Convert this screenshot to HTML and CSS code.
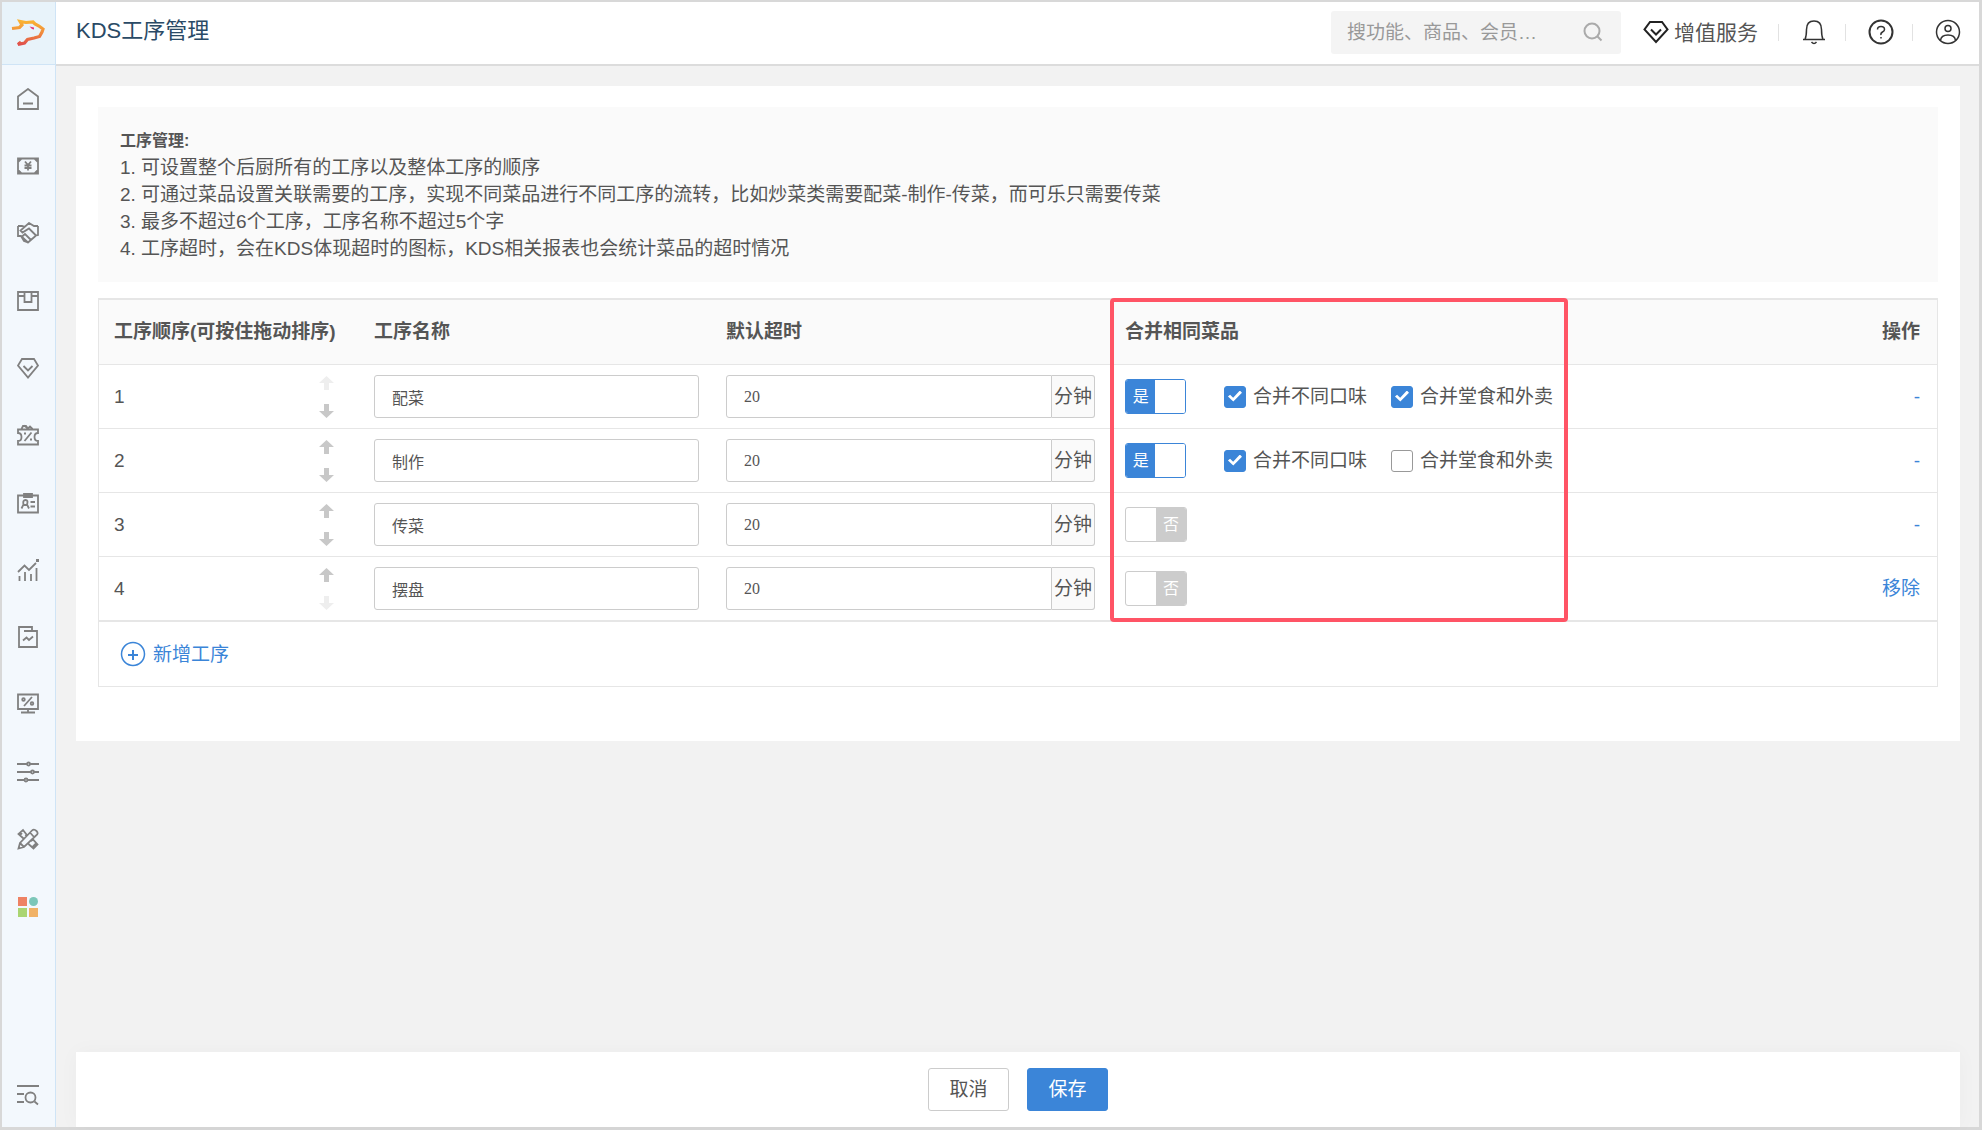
FILE: index.html
```html
<!DOCTYPE html>
<html lang="zh-CN">
<head>
<meta charset="utf-8">
<title>KDS工序管理</title>
<link rel="stylesheet" href="styles.css">
</head>
<body>
<div class="app">
  <aside class="sidebar">
    <a class="logo" href="#" aria-label="首页">
      <svg width="34" height="30" viewBox="0 0 34 30" fill="none" stroke-width="3.200">
        <defs><linearGradient id="brand" x1="0" y1="0" x2="0" y2="1"><stop offset="0" stop-color="#f9b233"/><stop offset=".5" stop-color="#f08a3c"/><stop offset="1" stop-color="#e0504c"/></linearGradient></defs>
        <path stroke="url(#brand)" d="M1 10.500L8.500 9.500L11 7L9 3.500L15 4.500L22 4L24 6L28 8L32 11L31 14L28.500 18.500L23 20L16.500 21.500L13.500 25L7 26.500L10 24"/>
        <path fill="#e5397c" d="M18.500 8.500L23 9.500L23 11.500L21 11Z"/>
      </svg>
    </a>
    <nav class="nav">
      <a href="#" aria-label="首页"><svg class="icon" viewBox="0 0 22 22"><path d="M1 8.500L11 1L21 8.500V21H1ZM6 15.500H16"/></svg></a>
      <a href="#" aria-label="收银"><svg class="icon" viewBox="0 0 22 22"><path d="M1 3.500H21V18.500H1ZM1 7L4.500 3.500M21 7L17.500 3.500M1 15L4.500 18.500M21 15L17.500 18.500M8 6.500L11 10L14 6.500M7.500 10.500H14.500M7.500 13H14.500M11 10V15.500"/></svg></a>
      <a href="#" aria-label="合作"><svg class="icon" viewBox="0 0 22 22"><path d="M1 4H5L8.500 5M21 4H17L12 1L3.500 8.500L5.500 10.500L12 6.500L19 13.500L21 13V4M1 4V14H4L11 20.500L18.500 14M5 14.500L8 12L14 18M4 14L7 19L11 20.500"/></svg></a>
      <a href="#" aria-label="商品"><svg class="icon" viewBox="0 0 22 22"><path d="M1 2H21V20H1ZM1 6H7.500M14.500 6H21M7.500 2V12H14.500V2"/></svg></a>
      <a href="#" aria-label="会员"><svg class="icon" viewBox="0 0 22 22"><path d="M5 2H17L21 8.500L11 20.500L1 8.500ZM6.500 9L11 13.500L15.500 9"/></svg></a>
      <a href="#" aria-label="营销"><svg class="icon" viewBox="0 0 22 22"><path d="M1 5.500H21V9Q17.500 9 17.500 13T21 17V20.500H1V17Q4.500 17 4.500 13T1 9ZM4.500 5L6 2H9L11 4.500L13 2.500L15.500 5M7 1.500L11 4.500M14.500 8.500L7.500 17"/><path d="M7 9.500H9M13 15.500H15" stroke-width="2"/></svg></a>
      <a href="#" aria-label="员工"><svg class="icon" viewBox="0 0 22 22"><path d="M1 3.500H21V20.500H1ZM7 2H15V5H7ZM13.500 10H18M13.500 14.500H18M4.500 16.500L6.500 12.500Q5.500 8 8.500 8T10 12.500L12 16.500M6.500 13H10"/></svg></a>
      <a href="#" aria-label="统计"><svg class="icon" viewBox="0 0 22 22"><path d="M1 13L7.500 6.500L12 11L19 4M2.500 17V22M8 13V22M14 15V22M19.500 9V22"/><path d="M19 1.500H22" stroke-width="3"/></svg></a>
      <a href="#" aria-label="报表"><svg class="icon" viewBox="0 0 22 22"><path d="M2 1H15V5H20V21H2ZM7 5H20M6 14.500L9.500 11.500L12 14L16 10.500"/></svg></a>
      <a href="#" aria-label="促销"><svg class="icon" viewBox="0 0 22 22"><path d="M1 1.500H21V16H1ZM4 19.500H18M11 16V19M15 4L7 13"/><circle cx="6.500" cy="6.500" r="1.300"/><circle cx="15" cy="10.500" r="1.300"/></svg></a>
      <a href="#" aria-label="设置"><svg class="icon" viewBox="0 0 22 22"><path d="M0 3H10M13 3H22M0 11H14M17 11H22M0 19H7.500M10.500 19H22"/><circle cx="11.500" cy="3" r="1.500"/><circle cx="15.500" cy="11" r="1.500"/><circle cx="9" cy="19" r="1.500"/></svg></a>
      <a href="#" aria-label="工具"><svg class="icon" viewBox="0 0 22 22"><path d="M1.500 20.500L3 15L15 2.500Q17 .5 19.500 3T19 7.500L7 19ZM3 15L7 19M13 4.500L17 9M8.500 8L9.500 6.500L6 2L1.500 6L6.500 10.500M14 13L16 11.500L20.500 16.500L16.500 20.500L11.500 16M2.500 7.500L5 5M15.500 19L19 15.500"/></svg></a>
      <a href="#" aria-label="应用"><svg class="icon" viewBox="0 0 22 22"><g stroke="none"><path fill="#ee8264" d="M1 2h9v9H1z"/><circle cx="16.500" cy="6.500" r="4.500" fill="#7cc7b9"/><path fill="#aad572" d="M1 13h9v9H1z"/><path fill="#f1b266" d="M12 13h9v9h-9z"/></g></svg></a>
    </nav>
    <a class="menu-search" href="#" aria-label="菜单搜索"><svg class="icon" viewBox="0 0 22 22"><path d="M0 2H22M0 10H7M0 18H7M17.500 17.500L21 20.500"/><circle cx="13.500" cy="13.500" r="5"/></svg></a>
  </aside>

  <div class="content">
    <header class="topbar">
      <h1>KDS工序管理</h1>
      <div class="search">
        <input type="search" aria-label="搜索" placeholder="搜功能、商品、会员…">
        <svg width="20" height="20" viewBox="0 0 20 20" fill="none" stroke="#aaa" stroke-width="2"><circle cx="9" cy="9" r="7.500"/><path d="M14.500 14.500L18.500 18.500"/></svg>
      </div>
      <a class="vip" href="#">
        <svg width="26" height="24" viewBox="0 0 26 24" fill="none" stroke="#222" stroke-width="2"><path d="M7 2H19L24.500 9.500L13 22L1.500 9.500ZM8 9.500L13 14.500L18 9.500"/></svg>
        增值服务
      </a>
      <button class="tool" aria-label="通知"><svg width="26" height="26" viewBox="0 0 26 26"><path d="M2 20.500H24M4 20.500Q5.500 17 5.500 10.500Q5.500 2 13 2T20.500 10.500Q20.500 17 22 20.500M10.500 23Q13 26 15.500 23"/></svg></button>
      <button class="tool" aria-label="帮助"><svg width="26" height="26" viewBox="0 0 26 26"><circle cx="13" cy="13" r="11.500" stroke-width="2"/><path d="M9.500 10.500Q9.500 7.500 13 7.500T16.500 10.500Q16.500 12 14.500 13T13 16M13 18V19.500"/></svg></button>
      <button class="tool" aria-label="账户"><svg width="26" height="26" viewBox="0 0 26 26"><circle cx="13" cy="13" r="11.500"/><circle cx="13" cy="9.500" r="3"/><path d="M5.500 21.500Q6 16 13 16T20.500 21.500"/></svg></button>
    </header>

    <main class="card">
      <section class="tips">
        <h2>工序管理:</h2>
        <p>1. 可设置整个后厨所有的工序以及整体工序的顺序</p>
        <p>2. 可通过菜品设置关联需要的工序，实现不同菜品进行不同工序的流转，比如炒菜类需要配菜-制作-传菜，而可乐只需要传菜</p>
        <p>3. 最多不超过6个工序，工序名称不超过5个字</p>
        <p>4. 工序超时，会在KDS体现超时的图标，KDS相关报表也会统计菜品的超时情况</p>
      </section>

      <table class="steps">
        <thead>
          <tr>
            <th class="col-order">工序顺序(可按住拖动排序)</th>
            <th class="col-name">工序名称</th>
            <th class="col-time">默认超时</th>
            <th class="col-merge">合并相同菜品<span class="marker"></span></th>
            <th class="col-action">操作</th>
          </tr>
        </thead>
        <tbody>
          <tr>
            <td><div class="order">1<span class="arrows"><button disabled aria-label="上移"><svg viewBox="0 0 15 14"><path d="M7.500 0L15 7H10V14H5V7H0Z"/></svg></button><button aria-label="下移"><svg viewBox="0 0 15 14"><path d="M7.500 14L15 7H10V0H5V7H0Z"/></svg></button></span></div></td>
            <td><input class="field" type="text" aria-label="工序名称" value="配菜"></td>
            <td><label class="timeout"><input class="field" type="text" aria-label="默认超时" value="20"><span>分钟</span></label></td>
            <td><div class="merge"><label class="switch"><input type="checkbox" aria-label="合并相同菜品" checked><span class="yes">是</span><span class="no">否</span></label><label class="check"><input type="checkbox" checked>合并不同口味</label><label class="check"><input type="checkbox" checked>合并堂食和外卖</label></div></td>
            <td class="action"><span class="none">-</span></td>
          </tr>
          <tr>
            <td><div class="order">2<span class="arrows"><button aria-label="上移"><svg viewBox="0 0 15 14"><path d="M7.500 0L15 7H10V14H5V7H0Z"/></svg></button><button aria-label="下移"><svg viewBox="0 0 15 14"><path d="M7.500 14L15 7H10V0H5V7H0Z"/></svg></button></span></div></td>
            <td><input class="field" type="text" aria-label="工序名称" value="制作"></td>
            <td><label class="timeout"><input class="field" type="text" aria-label="默认超时" value="20"><span>分钟</span></label></td>
            <td><div class="merge"><label class="switch"><input type="checkbox" aria-label="合并相同菜品" checked><span class="yes">是</span><span class="no">否</span></label><label class="check"><input type="checkbox" checked>合并不同口味</label><label class="check"><input type="checkbox">合并堂食和外卖</label></div></td>
            <td class="action"><span class="none">-</span></td>
          </tr>
          <tr>
            <td><div class="order">3<span class="arrows"><button aria-label="上移"><svg viewBox="0 0 15 14"><path d="M7.500 0L15 7H10V14H5V7H0Z"/></svg></button><button aria-label="下移"><svg viewBox="0 0 15 14"><path d="M7.500 14L15 7H10V0H5V7H0Z"/></svg></button></span></div></td>
            <td><input class="field" type="text" aria-label="工序名称" value="传菜"></td>
            <td><label class="timeout"><input class="field" type="text" aria-label="默认超时" value="20"><span>分钟</span></label></td>
            <td><div class="merge"><label class="switch"><input type="checkbox" aria-label="合并相同菜品"><span class="yes">是</span><span class="no">否</span></label></div></td>
            <td class="action"><span class="none">-</span></td>
          </tr>
          <tr>
            <td><div class="order">4<span class="arrows"><button aria-label="上移"><svg viewBox="0 0 15 14"><path d="M7.500 0L15 7H10V14H5V7H0Z"/></svg></button><button disabled aria-label="下移"><svg viewBox="0 0 15 14"><path d="M7.500 14L15 7H10V0H5V7H0Z"/></svg></button></span></div></td>
            <td><input class="field" type="text" aria-label="工序名称" value="摆盘"></td>
            <td><label class="timeout"><input class="field" type="text" aria-label="默认超时" value="20"><span>分钟</span></label></td>
            <td><div class="merge"><label class="switch"><input type="checkbox" aria-label="合并相同菜品"><span class="yes">是</span><span class="no">否</span></label></div></td>
            <td class="action"><a href="#">移除</a></td>
          </tr>
        </tbody>
        <tfoot>
          <tr>
            <td colspan="5">
              <button class="add"><svg width="26" height="26" viewBox="0 0 26 26" fill="none" stroke="currentColor"><circle cx="13" cy="13" r="11.500" stroke-width="1.500"/><path stroke-width="2" d="M8 14H18M13 9V19"/></svg>新增工序</button>
            </td>
          </tr>
        </tfoot>
      </table>
    </main>

    <footer class="actions">
      <button class="btn">取消</button>
      <button class="btn primary">保存</button>
    </footer>
  </div>
</div>
</body>
</html>
```

FILE: styles.css
```css
* {
  box-sizing: border-box;
}

body {
  margin: 0;
  font: 19px/27px "Liberation Sans", "Noto Sans CJK SC", sans-serif;
  color: #555;
}

button,
input {
  font: inherit;
  color: inherit;
}

button {
  padding: 0;
  border: 0;
  background: none;
}

a {
  color: #3b85d8;
  text-decoration: none;
}

svg {
  display: block;
}

.app {
  display: flex;
  min-height: 100vh;
  border: 2px solid #d8d8d8;
  border-width: 2px 3px 3px 2px;
  background: #f2f2f2;
}

/* Sidebar */

.sidebar {
  display: flex;
  flex-direction: column;
  flex: none;
  width: 54px;
  border-right: 1px solid #cfe4f6;
  background: #f3f8fd;
}

.logo {
  display: flex;
  align-items: center;
  justify-content: center;
  height: 63px;
  padding-right: 1px;
  border-bottom: 1px solid #cfe4f6;
  background: #e8f3fa;
}

.nav {
  display: flex;
  flex-direction: column;
  height: 875px;
}

.nav a {
  display: flex;
  flex: 1;
  align-items: center;
  justify-content: center;
  padding-right: 1px;
}

.icon {
  width: 22px;
  height: 22px;
  fill: none;
  stroke: #808080;
  stroke-width: 1.8;
}

.menu-search {
  margin: auto auto 21px;
  padding-right: 1px;
}

/* Top bar */

.content {
  display: flex;
  flex: 1;
  flex-direction: column;
  min-width: 0;
}

.topbar {
  display: flex;
  align-items: center;
  height: 64px;
  padding: 0 0 2px 20px;
  border-bottom: 2px solid #dcdcdc;
  background: #fff;
}

.topbar h1 {
  flex: 1;
  margin: 0 0 4px;
  font-size: 22px;
  font-weight: 400;
  color: #2a4a66;
}

.search {
  display: flex;
  align-items: center;
  width: 290px;
  height: 43px;
  padding: 0 18px 0 16px;
  border-radius: 3px;
  background: #f4f4f4;
}

.search input {
  flex: 1;
  min-width: 0;
  padding: 0;
  border: 0;
  outline: 0;
  background: none;
}

.search input::placeholder {
  color: #999;
}

.vip {
  display: flex;
  align-items: center;
  gap: 5px;
  margin: 0 20px 0 22px;
  font-size: 21px;
  color: #555;
}

.tool {
  display: flex;
  align-items: center;
  justify-content: center;
  width: 67px;
  height: 26px;
  padding-left: 5px;
  background: linear-gradient(#e2e2e2, #e2e2e2) 0 50% / 1px 17px no-repeat;
}

.tool svg {
  fill: none;
  stroke: #333;
  stroke-width: 1.5;
}

/* Main card */

.card {
  margin: 20px 19px 20px 20px;
  padding: 21px 22px 54px;
  background: #fff;
}

.tips {
  padding: 20px 22px;
  background: #fafafa;
}

.tips h2,
.tips p {
  margin: 0;
}

.tips h2 {
  font-size: 16px;
  line-height: 27px;
}

.steps {
  width: 100%;
  margin-top: 16px;
  border: 1px solid #e6e6e6;
  border-top-width: 2px;
  border-spacing: 0;
  table-layout: fixed;
}

.steps th,
.steps td {
  height: 64px;
  padding: 0 15px;
  border-bottom: 1px solid #e6e6e6;
  text-align: left;
}

.steps th {
  height: 65px;
  padding-bottom: 2px;
  background: #fafafa;
}

.steps tbody tr:last-child td {
  height: 65px;
  border-bottom-width: 2px;
}

.steps tfoot td {
  border-bottom: 0;
}

.col-order {
  width: 260px;
}

.col-name {
  width: 352px;
}

.col-time {
  width: 399px;
}

.steps .col-merge {
  position: relative;
  width: 458px;
}

.steps .col-action,
.steps .action {
  padding-right: 17px;
  text-align: right;
}

.none {
  color: #3b85d8;
}

/* Outline around the whole merge column */

.marker {
  position: absolute;
  top: -2px;
  left: 0;
  z-index: 1;
  width: 100%;
  height: 324px;
  border: 4px solid #ff5465;
  border-radius: 4px;
  pointer-events: none;
}

.order {
  display: flex;
  align-items: center;
  justify-content: space-between;
  padding-right: 10px;
}

.arrows {
  display: grid;
  gap: 14px;
}

.arrows svg {
  width: 15px;
  height: 14px;
  fill: #c8c8c8;
}

.arrows :disabled svg {
  fill: #eee;
}

.field {
  display: block;
  width: 325px;
  height: 43px;
  padding: 0 17px;
  border: 1px solid #ccc;
  border-radius: 3px;
  background: #fff;
  font-family: "Liberation Serif", "Noto Sans CJK SC", serif;
  font-size: 16px;
}

.timeout {
  display: flex;
  height: 43px;
}

.timeout .field {
  flex: 1;
  min-width: 0;
  border-radius: 3px 0 0 3px;
}

.timeout span {
  width: 43px;
  border: 1px solid #ccc;
  border-left: 0;
  border-radius: 0 3px 3px 0;
  background: #fafafa;
  line-height: 41px;
  text-align: center;
}

.merge {
  display: flex;
  align-items: center;
  white-space: nowrap;
}

.switch {
  display: flex;
  width: 62px;
  height: 35px;
  margin-right: 38px;
  border: 1px solid #ccc;
  border-radius: 3px;
  overflow: hidden;
  font-size: 16px;
  line-height: 33px;
  text-align: center;
  color: transparent;
}

.switch input {
  appearance: none;
  width: 0;
  height: 0;
  margin: 0;
}

.switch span {
  flex: 1;
}

.switch .no {
  background: #ccc;
  color: #fff;
}

.switch :checked ~ .yes {
  background: #3b85d8;
  color: #fff;
}

.switch :checked ~ .no {
  background: #fff;
  color: transparent;
}

.switch:has(:checked) {
  border-color: #3b85d8;
}

.check {
  display: flex;
  align-items: center;
  gap: 7px;
  margin-right: 24px;
}

.check:last-child {
  margin-right: 0;
}

.check input {
  display: grid;
  place-items: center;
  appearance: none;
  width: 22px;
  height: 22px;
  margin: 0;
  border: 1px solid #999;
  border-radius: 3px;
  background: #fff;
}

.check :checked {
  border-color: #3b85d8;
  background: #3b85d8;
}

.check :checked::before {
  content: "";
  width: 14px;
  height: 12px;
  background: #fff;
  clip-path: polygon(0 50%, 15% 35%, 37% 60%, 85% 0, 100% 18%, 38% 92%);
}

.add {
  display: flex;
  align-items: center;
  gap: 7px;
  margin-left: 6px;
  color: #3b85d8;
}

/* Footer */

.actions {
  display: flex;
  align-items: center;
  justify-content: center;
  gap: 18px;
  height: 75px;
  margin: auto 19px 0 20px;
  background: #fff;
  box-shadow: 0 0 20px rgba(0, 0, 0, .03);
}

.btn {
  width: 81px;
  height: 43px;
  border: 1px solid #ccc;
  border-radius: 3px;
  background: #fff;
}

.primary {
  border-color: #3b85d8;
  background: #3b85d8;
  color: #fff;
}
```
